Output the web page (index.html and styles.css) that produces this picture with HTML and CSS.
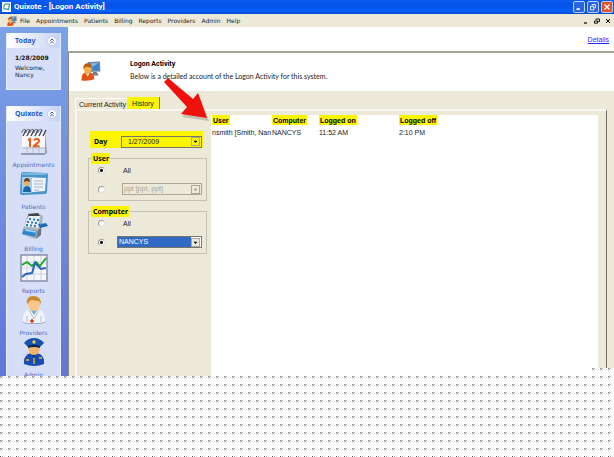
FILE: index.html
```html
<!DOCTYPE html>
<html lang="en">
<head>
<meta charset="utf-8">
<title>Quixote - [Logon Activity]</title>
<link rel="stylesheet" href="styles.css">
</head>
<body>
<div class="app">
  <header class="titlebar">
    <svg class="app-logo" viewBox="0 0 9 10"><rect width="9" height="10" fill="#fff"/><path d="M3 2h4.500L6.500 7H2C1.500 5 2 3 3 2zM5.500 7l1.500 1.500" fill="none" stroke="#167d83"/></svg>
    <h1>Quixote - [Logon Activity]</h1>
    <div class="window-buttons">
      <button class="win" aria-label="Minimize"><svg viewBox="0 0 12 12"><path d="M3 8.500h4" stroke="#fff" stroke-width="2"/></svg></button>
      <button class="win" aria-label="Restore"><svg viewBox="0 0 12 12"><path d="M5 5V3h4v4H7M3 5.500h4v4H3z" fill="none" stroke="#fff"/></svg></button>
      <button class="win close" aria-label="Close"><svg viewBox="0 0 12 12"><path d="M3 3l6 6M9 3l-6 6" stroke="#fff" stroke-width="1.600"/></svg></button>
    </div>
  </header>

  <nav class="menubar">
    <svg class="menu-icon" viewBox="0 0 18 18"><use href="#user-monitor"/></svg>
    <button>File</button><button>Appointments</button><button>Patients</button><button>Billing</button><button>Reports</button><button>Providers</button><button>Admin</button><button>Help</button>
    <div class="child-buttons">
      <button aria-label="Minimize window"><svg viewBox="0 0 6 6"><path d="M1 5h3" stroke="#000" stroke-width="1.200"/></svg></button>
      <button aria-label="Restore window"><svg viewBox="0 0 6 6"><path d="M2 2V1h3.500v2.500H4M.5 3h3v2.200h-3z" fill="none" stroke="#000" stroke-width=".9"/></svg></button>
      <button aria-label="Close window"><svg viewBox="0 0 6 6"><path d="M1 1l4 4M5 1L1 5" stroke="#000"/></svg></button>
    </div>
  </nav>

  <div class="workspace">
    <aside class="sidebar">
      <section class="side-panel">
        <div class="side-head"><h2>Today</h2><button class="collapse" aria-label="Collapse Today"><svg viewBox="0 0 10 10"><circle cx="5" cy="5" r="4.300" fill="#fff" stroke="#b6c4e8" stroke-width=".7"/><path d="M3.300 4.700L5 3l1.700 1.700M3.300 7.200L5 5.500l1.700 1.700" fill="none" stroke="#17388f" stroke-width=".9"/></svg></button></div>
        <div class="today"><strong>1/28/2009</strong><p>Welcome,<br>Nancy</p></div>
      </section>
      <section class="side-panel shortcuts">
        <div class="side-head"><h2>Quixote</h2><button class="collapse" aria-label="Collapse Quixote"><svg viewBox="0 0 10 10"><circle cx="5" cy="5" r="4.300" fill="#fff" stroke="#b6c4e8" stroke-width=".7"/><path d="M3.300 4.700L5 3l1.700 1.700M3.300 7.200L5 5.500l1.700 1.700" fill="none" stroke="#17388f" stroke-width=".9"/></svg></button></div>
        <ul>
          <li><a href="#"><svg viewBox="0 0 28 28"><path d="M2 4h23l2 21-3 2H1z" fill="#909bb4"/><path d="M2 4h23v21H1z" fill="#fbfbff"/><path d="M2 19h23v6H1z" fill="#dde0f2"/><path d="M2 20h23M7 18v7M13 18v7M19 18v7" stroke="#aab1d0" stroke-width=".7"/><path d="M3 8l3-6M7 8l3-6M11 8l3-6M15 8l3-6M19 8l3-6M23 8l3-6" stroke="#484c57" stroke-width="1.500"/><path d="M2 5c0-4 3-4 4-3M6 5c0-4 3-4 4-3M10 5c0-4 3-4 4-3M14 5c0-4 3-4 4-3M18 5c0-4 3-4 4-3" fill="none" stroke="#555a66"/><path d="M8 12l2-1v8M14 12.500c1-2 5-2 5 .5 0 2-4 3-5 5.200h5.500" fill="none" stroke="#ee5b14" stroke-width="2"/></svg>Appointments</a></li>
          <li><a href="#"><svg viewBox="0 0 28 28"><path d="M1 4q0-2 2-2l23 1q2 0 2 2l-1 17q0 2-2 2L2 25q-2 0-2-2z" fill="#4b95cb"/><path d="M2 7l24 1-1 13-23 2z" fill="#eef4fb"/><path d="M2 7l10 .5v14.800L2 23z" fill="#9ed2f4"/><path d="M3 22q0-6 4-6t4 6z" fill="#1c65a8"/><circle cx="7" cy="13" r="3" fill="#efb064"/><path d="M4 12q0-4 3-4t3 4l-3-1z" fill="#704115"/><path d="M14 11h9M14 14h9M14 17h9M14 20h5" stroke="#a6b3c7"/><path d="M2 4h24" stroke="#a5daf4"/></svg>Patients</a></li>
          <li><a href="#"><svg viewBox="0 0 28 28"><path d="M8 2l10-1 5 3-2 18-6 5L2 22l1-5z" fill="#aeb4bc"/><path d="M8 2l10-1 2 3-11 1z" fill="#41464e"/><path d="M9 4l11 0-2 12L4 14z" fill="#eceff4"/><path d="M4 17l13 2-2 6L2 22z" fill="#2d87ce"/><path d="M5 18l11 2" stroke="#9dd7fa" stroke-width="1.500"/><path d="M9 7h2M13 7.500h2M17 8h2M7 10h2M11 10.500h2M15 11h2M6 13h2M10 13.500h2M14 14h2" stroke="#277dc3" stroke-width="1.800"/><path d="M18 12l8-1 2 3-8 2z" fill="#1c6ab3"/><path d="M20 12l5-1" stroke="#73bbec"/><path d="M18 18l3-2v7l-5 4z" fill="#6d747d"/></svg>Billing</a></li>
          <li><a href="#"><svg viewBox="0 0 28 28"><path d="M1 1h26v26H1z" fill="#f6f7fc" stroke="#888eaa" stroke-width="1.500"/><path d="M7 2v24M14 2v24M21 2v24M2 8h24M2 14h24M2 20h24" stroke="#ccd0df"/><path d="M2 11l5-3 5 4 4-4 4 4 6-8" fill="none" stroke="#19a51d" stroke-width="1.800"/><path d="M2 23l4-3 6-1 3-10 6 6 5-1" fill="none" stroke="#2867bd" stroke-width="2"/></svg>Reports</a></li>
          <li><a href="#"><svg viewBox="0 0 28 28"><ellipse cx="14" cy="26" rx="12" ry="2" fill="#9da8c7"/><path d="M3 26q-1-11 7-13h8q8 2 7 13l-5 1H7z" fill="#f1f4fa"/><path d="M10 13l4 6 4-6z" fill="#79a8dc"/><path d="M9 14l5 9 5-9M7 20v6M21 20v6" fill="none" stroke="#b5bfd1"/><path d="M8 7q0-6 6-6t6 6q0 8-6 8t-6-8z" fill="#f8c685"/><path d="M7 8Q6 0 13 0q8 0 8 8l-2-3-8-1z" fill="#c98a2c"/><path d="M10 25h4M12 23v4" stroke="#e62e1a" stroke-width="1.500"/></svg>Providers</a></li>
          <li><a href="#"><svg viewBox="0 0 28 28"><path d="M4 26q-1-9 7-11h6q8 2 7 11-10 4-20 0z" fill="#174cb3"/><path d="M11 15l3 4 3-4z" fill="#0b2860"/><path d="M8 8h12q0 9-6 9T8 8z" fill="#f2b46a"/><path d="M4 5q4-5 10-5t10 5l-4 4H8z" fill="#1651b5"/><path d="M8 8q6-3 12 0v2q-6-2-12 0z" fill="#0b2459"/><circle cx="14" cy="4" r="1.700" fill="#f8ca32"/><path d="M6 22h3M19 20h3M14 20v6" stroke="#efbc35" stroke-width="1.300"/></svg>Admin</a></li>
        </ul>
      </section>
    </aside>

    <main class="content">
      <div class="linkbar"><a href="#">Details</a></div>
      <section class="intro">
        <svg class="intro-icon" viewBox="0 0 18 18"><g id="user-monitor"><path d="M6 1l11-.5.500 9L7 10z" fill="#7f8999"/><path d="M7.500 2l8.500-.4.300 6.700-8.500.5z" fill="#3c86cb"/><path d="M8 2.300l7.500-.4-6 4z" fill="#82bdec"/><path d="M11 10h3l2 3h-6z" fill="#737a85"/><path d="M.5 17.500Q0 10 6 10t6 6.500q-5 2-11.500 1z" fill="#e05317"/><path d="M4 11l2 3 2-3z" fill="#ffdda2"/><circle cx="6" cy="7" r="3.800" fill="#f5ae45"/><path d="M2 7q0-5 4-5t4 4L5 5z" fill="#b65b12"/></g></svg>
        <div><h2>Logon Activity</h2><p>Below is a detailed account of the Logon Activity for this system.</p></div>
      </section>
      <div class="tab-area">
        <div class="tabs" role="tablist"><button role="tab" aria-selected="false">Current Activity</button><button role="tab" aria-selected="true" class="active">History</button></div>
        <div class="tab-page">
          <form class="filters">
            <div class="day-row"><label for="day">Day</label><div class="combo"><select id="day"><option>1/27/2009</option></select><svg viewBox="0 0 9 9"><path d="M2 3.500h5l-2.500 3z"/></svg></div></div>
            <fieldset>
              <legend>User</legend>
              <div class="choice"><input type="radio" name="user" id="user-all" checked><label for="user-all">All</label></div>
              <div class="choice"><input type="radio" name="user" id="user-one" aria-label="One user"><div class="combo disabled"><select aria-label="User" disabled><option>ppt [ppt, ppt]</option></select><svg viewBox="0 0 9 9"><path d="M2 3.500h5l-2.500 3z"/></svg></div></div>
            </fieldset>
            <fieldset>
              <legend>Computer</legend>
              <div class="choice"><input type="radio" name="computer" id="computer-all"><label for="computer-all">All</label></div>
              <div class="choice"><input type="radio" name="computer" id="computer-one" aria-label="One computer" checked><div class="combo selected"><select aria-label="Computer"><option>NANCYS</option></select><svg viewBox="0 0 9 9"><path d="M2 3.500h5l-2.500 3z"/></svg></div></div>
            </fieldset>
          </form>
          <div class="list">
            <table>
              <colgroup><col class="c-user"><col class="c-computer"><col class="c-on"><col></colgroup>
              <thead><tr><th><span>User</span></th><th><span>Computer</span></th><th><span>Logged on</span></th><th><span>Logged off</span></th></tr></thead>
              <tbody><tr><td>nsmith [Smith, Nan</td><td>NANCYS</td><td>11:52 AM</td><td>2:10 PM</td></tr></tbody>
            </table>
          </div>
        </div>
      </div>
      <svg class="pointer" viewBox="0 0 50 48"><path d="M6 5l25 20 5-6 9 24-27-4 7-8z" fill="#444" opacity=".25"/><path d="M4 0l25 21 5-6 9 25-26-4 6-7L0 4z" fill="#f2100c"/></svg>
      <svg class="torn-corner"><rect width="100%" height="100%" fill="url(#dots)"/></svg>
    </main>
  </div>
</div>
<svg class="backdrop"><defs><pattern id="dots" width="8" height="8" patternUnits="userSpaceOnUse"><path d="M0 0h8v8H0z" fill="#fff"/><path d="M0 0h1v1H0z" fill="#555"/><path d="M1 1h1v1H1z" fill="#888"/><path d="M2 0h1v1H2z" fill="#aaa"/><path d="M0 2h1v1H0z" fill="#c0c0c0"/><path d="M2 2h1v1H2zM0 4h1v1H0zM4 0h1v1H4z" fill="#e2e2e2"/><path d="M4 2h1v1H4zM6 4h1v1H6zM3 5h1v1H3z" fill="#f2f2f2"/></pattern></defs><rect width="100%" height="100%" fill="url(#dots)"/></svg>
</body>
</html>
```
FILE: styles.css
```css
* { box-sizing: border-box; }
body {
  margin: 0;
  height: 100vh;
  display: flex;
  flex-direction: column;
  overflow: hidden;
  background: #fff;
  color: #222;
  font: 7px/9px "Liberation Sans", Arial, sans-serif;
}
h1, h2, p, ul, fieldset { margin: 0; padding: 0; }
button, select, input { font: inherit; color: inherit; margin: 0; padding: 0; border: 0; background: none; }
svg { display: block; }
.app { flex: 1; min-height: 0; display: flex; flex-direction: column; }
.backdrop { width: 100%; height: 81px; flex: none; }

.titlebar {
  flex: none;
  height: 14px;
  display: flex;
  align-items: center;
  gap: 3px;
  padding: 0 1px 0 2px;
  background: linear-gradient(#0a5cf0, #0553e6 40%, #0561fd 80%, #0345c8);
}
.titlebar h1 { flex: 1; color: #fff; font: bold 8px/12px Roboto, sans-serif; }
.app-logo { width: 9px; height: 10px; }
.window-buttons { display: flex; gap: 2px; }
.win { width: 12px; height: 12px; border: 1px solid #bcd0fa; border-radius: 2px; background: #2b64df; }
.close { background: #e2512c; }

.menubar {
  flex: none;
  height: 13px;
  display: flex;
  align-items: center;
  gap: 6px;
  padding: 0 3px 0 7px;
  background: #ece9d8;
  font: 6px/9px "DejaVu Sans", sans-serif;
}
.menu-icon { width: 10px; height: 10px; margin-right: -3px; }
.child-buttons { margin-left: auto; display: flex; gap: 5px; }
.child-buttons svg { width: 6px; height: 6px; }

.workspace { flex: 1; min-height: 0; display: flex; }
.sidebar {
  flex: none;
  width: 68px;
  padding: 6px 7px 0 6px;
  overflow: hidden;
  background: linear-gradient(#7ba2e7, #6375d6);
  font: 6px/8px "DejaVu Sans", sans-serif;
}
.side-panel { background: #d6dff7; border: 1px solid #e8eefc; border-top: 0; min-height: 57px; margin-bottom: 16px; }
.side-head {
  height: 15px;
  display: flex;
  align-items: center;
  justify-content: space-between;
  padding: 0 3px 0 8px;
  background: linear-gradient(90deg, #fff, #c6d3f7);
}
.side-head h2 { font: bold 7px/9px "Noto Sans", sans-serif; color: #2159c8; }
.collapse svg { width: 10px; height: 10px; }
.today { padding: 6px 8px; line-height: 7px; }
.today strong { display: block; margin-bottom: 3px; color: #111; }
.shortcuts ul { list-style: none; padding-top: 7px; }
.shortcuts li { height: 42px; }
.shortcuts a { display: flex; flex-direction: column; align-items: center; gap: 5px; color: #4c6bc0; text-decoration: none; }
.shortcuts a svg { width: 28px; height: 28px; flex: none; }

.content { flex: 1; min-width: 0; position: relative; display: flex; flex-direction: column; }
.linkbar { height: 24px; flex: none; display: flex; align-items: center; justify-content: flex-end; padding-right: 5px; }
.linkbar a { color: #2a2aff; }
.intro {
  flex: none;
  height: 40px;
  display: flex;
  gap: 29px;
  padding: 7px 12px;
  border-top: 2px solid #a5a294;
  border-left: 1px solid #8b897c;
}
.intro-icon { width: 20px; height: 20px; margin-top: 1px; }
.intro h2 { font: bold 7px/9px Roboto, sans-serif; color: #000; margin-bottom: 3px; }
.intro p { font-family: Lato, sans-serif; }
.tab-area {
  flex: 1;
  min-height: 0;
  display: flex;
  flex-direction: column;
  padding: 6px 7px 0 6px;
  background: #ece9d8;
  border-left: 1px solid #8b897c;
}
.tabs { flex: none; display: flex; align-items: flex-end; height: 12px; }
.tabs button { height: 11px; padding: 0 1px 0 3px; border-top: 1px solid #fff; border-left: 1px solid #fff; }
.tabs .active { height: 12px; padding: 0 5px; background: #fcf500; border: 0; border-right: 1px solid #777; }
.tab-page {
  flex: 1;
  min-height: 0;
  display: flex;
  border: solid #f8f7f0;
  border-width: 2px 0 0 2px;
  border-right: 1px solid #716f64;
  padding: 4px 8px 0 0;
}
.filters { flex: none; width: 134px; padding: 16px 4px 0 11px; }
.day-row { display: flex; align-items: center; height: 17px; margin: 0 4px 5px 2px; padding: 4px 1px 0 4px; background: #fcf500; }
.day-row label { width: 27px; font: bold 7px/9px "Noto Sans", sans-serif; color: #000; }
.day-row .combo { background: #fcf500; }
.combo { flex: 1; display: flex; align-items: center; height: 12px; border: 1px solid #77756a; background: #fff; padding-right: 1px; }
.combo select { appearance: none; flex: 1; min-width: 0; height: 10px; padding: 0 6px; border-radius: 0; line-height: 10px; opacity: 1; }
.combo svg { width: 9px; height: 9px; background: #ece9d8; border: 1px solid #aaa797; }
.day-row .combo svg { background: #fcf500; }
.disabled { background: #ece9d8; border-color: #aaa797; color: #aaa797; }
.disabled svg { fill: #999683; }
.disabled select { padding: 0 1px; }
.selected select { background: #316ac5; color: #fff; padding: 0 1px; }
fieldset { border: 1px solid #c5c2b2; min-width: 0; margin-bottom: 5px; padding: 0 4px 5px 9px; }
legend { margin-left: -7px; padding: 0 1px 0 2px; height: 11px; background: #fcf500; font: bold 7px/11px "Noto Sans", sans-serif; color: #000; }
.choice { display: flex; align-items: center; height: 12px; }
.choice + .choice { margin-top: 7px; }
.choice label { margin-left: 18px; }
.choice .combo { margin-left: 17px; }
.choice .selected { margin-left: 12px; }
.choice input { appearance: none; flex: none; width: 7px; height: 7px; border: 1px solid #999; border-right-color: #ddd; border-bottom-color: #ddd; border-radius: 50%; background: #fff; }
.choice input:checked { background: radial-gradient(circle, #000 1px, #fff 2px); }
.list { flex: 1; min-width: 0; background: #fff; }
table { width: 100%; table-layout: fixed; border-collapse: collapse; }
th, td { padding: 0 1px; text-align: left; white-space: nowrap; overflow: hidden; }
th { height: 12px; color: #000; vertical-align: top; }
th span { display: inline-block; padding: 0 1px; height: 10px; line-height: 11px; background: #fcf500; }
td { height: 11px; }
.c-user { width: 60px; }
.c-computer { width: 47px; }
.c-on { width: 80px; }
.pointer { position: absolute; left: 96px; top: 51px; width: 50px; height: 48px; pointer-events: none; }
.torn-corner { position: absolute; right: 0; bottom: 0; width: 22px; height: 8px; }
```
